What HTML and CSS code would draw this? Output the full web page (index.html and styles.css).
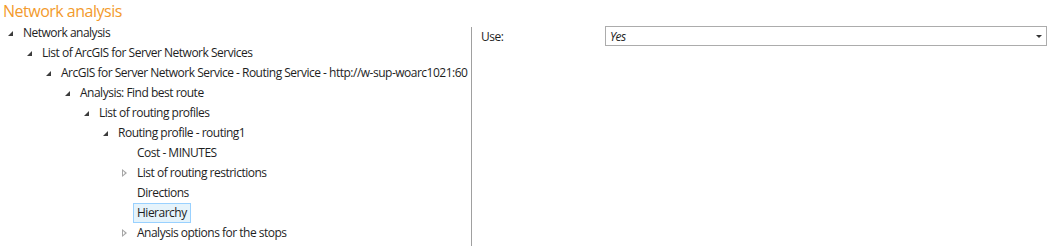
FILE: index.html
```html
<!DOCTYPE html>
<html lang="en">

<head>
    <meta charset="UTF-8">
    <title>Network analysis</title>
    <link rel="stylesheet" href="styles.css">
</head>

<body>
<div class="title">Network analysis</div>
<div class="panes">
    <ul class="tree">
        <li class="lvl0"><span class="arrow open"></span>Network analysis</li>
        <li class="lvl1"><span class="arrow open"></span>List of ArcGIS for Server Network Services</li>
        <li class="lvl2"><span class="arrow open"></span>ArcGIS for Server Network Service - Routing Service - http://w-sup-woarc1021:60</li>
        <li class="lvl3"><span class="arrow open"></span>Analysis: Find best route</li>
        <li class="lvl4"><span class="arrow open"></span>List of routing profiles</li>
        <li class="lvl5"><span class="arrow open"></span>Routing profile - routing1</li>
        <li class="lvl6"><span class="arrow"></span>Cost - MINUTES</li>
        <li class="lvl6"><span class="arrow closed"></span>List of routing restrictions</li>
        <li class="lvl6"><span class="arrow"></span>Directions</li>
        <li class="lvl6"><span class="arrow"></span><span class="selected">Hierarchy</span></li>
        <li class="lvl6"><span class="arrow closed"></span>Analysis options for the stops</li>
    </ul>
    <div class="divider"></div>
    <div class="props">
        <div class="prop">
            <span class="label">Use:</span>
            <div class="select">
                <span class="value">Yes</span>
                <span class="caret"></span>
            </div>
        </div>
    </div>
</div>
</body>

</html>
```

FILE: styles.css
```css
body {
    margin: 0;
    font-family: "Open Sans", sans-serif;
    font-size: 12px;
    letter-spacing: -0.5px;
    color: #1e1e1e;
    background-color: white;
}

.title {
    height: 23px;
    line-height: 23px;
    padding-left: 3px;
    font-size: 16px;
    color: #f39a2c;
}

.panes {
    display: flex;
}

.tree {
    margin: 0;
    padding: 0;
    width: 471px;
    list-style: none;
    white-space: nowrap;
    overflow: hidden;
}

.tree li {
    height: 20px;
    line-height: 20px;
    display: flex;
    align-items: center;
}

.tree .lvl0 { padding-left: 5px; }
.tree .lvl1 { padding-left: 24px; }
.tree .lvl2 { padding-left: 43px; }
.tree .lvl3 { padding-left: 62px; }
.tree .lvl4 { padding-left: 81px; }
.tree .lvl5 { padding-left: 100px; }
.tree .lvl6 { padding-left: 119px; }

.arrow {
    width: 18px;
    height: 20px;
    flex: none;
    position: relative;
}

.arrow.open:before {
    content: '';
    position: absolute;
    left: 3px;
    top: 8px;
    border-style: solid;
    border-width: 0 0 5px 5px;
    border-color: transparent transparent #3c3c3c transparent;
}

.arrow.closed:before {
    content: '';
    position: absolute;
    left: 3px;
    top: 6px;
    width: 0;
    height: 0;
    border-style: solid;
    border-width: 4px 0 4px 5px;
    border-color: transparent transparent transparent #a6a6a6;
}

.arrow.closed:after {
    content: '';
    position: absolute;
    left: 4px;
    top: 8px;
    border-style: solid;
    border-width: 2px 0 2px 2.5px;
    border-color: transparent transparent transparent white;
}

.selected {
    margin-left: -4px;
    padding: 0 3px;
    height: 18px;
    line-height: 18px;
    background-color: #e5f3fb;
    border: 1px solid #99d1ff;
}

.divider {
    width: 1px;
    margin-top: 4px;
    height: 219px;
    background-color: #a0a0a0;
}

.props {
    flex: 1;
    padding-left: 9px;
    padding-right: 5px;
}

.prop {
    display: flex;
    align-items: center;
    height: 22px;
    margin-top: 2px;
}

.label {
    width: 124px;
}

.select {
    flex: 1;
    height: 18px;
    border: 1px solid #acacac;
    display: flex;
    align-items: center;
    padding-left: 4px;
    padding-right: 4px;
}

.value {
    flex: 1;
    font-style: italic;
}

.caret {
    width: 0;
    height: 0;
    border-style: solid;
    border-width: 3px 3px 0 3px;
    border-color: #333 transparent transparent transparent;
}
```
